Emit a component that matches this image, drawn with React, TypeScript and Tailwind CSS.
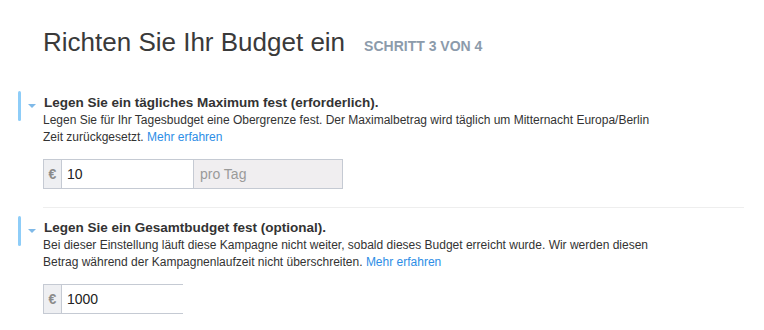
import React from "react"

function Caret() {
  return (
    <svg width="8" height="4" viewBox="0 0 8 4" className="mt-[10px] shrink-0">
      <path d="M0 0 H8 L4 4 Z" fill="#7fb9e8" />
    </svg>
  )
}

function Section({
  title,
  children,
  input,
}: {
  title: string
  children: React.ReactNode
  input: React.ReactNode
}) {
  return (
    <div className="flex pl-[18px]">
      <div className="w-[3px] h-[30px] rounded-sm bg-[#8ecdf8] shrink-0" />
      <div className="ml-[7px] mr-[7px] pt-[3px]">
        <Caret />
      </div>
      <div className="flex-1 pt-[3px]">
        <h2 className="text-[13.5px] leading-[18px] font-bold text-[#333] pl-[1px]">{title}</h2>
        <p className="text-[12px] leading-[17px] text-[#333]">{children}</p>
        <div className="mt-[13px]">{input}</div>
      </div>
    </div>
  )
}

function Link() {
  return <a className="text-[#2d8ee6]">Mehr erfahren</a>
}

export default function App() {
  return (
    <div className="w-[764px] h-[330px] overflow-hidden bg-white font-['Liberation_Sans',Arial,sans-serif]">
      {/* Header */}
      <div className="pt-[27px] pl-[43px] flex items-baseline gap-[19px]">
        <h1 className="text-[26px] leading-[30px] text-[#3a3a3a] font-light">Richten Sie Ihr Budget ein</h1>
        <span className="text-[14px] font-bold uppercase text-[#8c9bab]">Schritt 3 von 4</span>
      </div>

      <div className="mt-[34px]">
        <Section
          title="Legen Sie ein tägliches Maximum fest (erforderlich)."
          input={
            <div className="flex w-[300px] h-[30px] border border-[#c5cad3] text-[14px]">
              <div className="w-[18px] bg-[#eeeff2] border-r border-[#c5cad3] flex items-center justify-center text-[#8a8a8a] font-bold text-[14px]">
                €
              </div>
              <div className="w-[131px] bg-white flex items-center pl-[5px] text-[#222]">10</div>
              <div className="flex-1 bg-[#f0eef0] border-l border-[#c5cad3] flex items-center pl-[6px] text-[#9a9a9a]">
                pro Tag
              </div>
            </div>
          }
        >
          Legen Sie für Ihr Tagesbudget eine Obergrenze fest. Der Maximalbetrag wird täglich um Mitternacht Europa/Berlin
          <br />
          Zeit zurückgesetzt. <Link />
        </Section>
      </div>

      <div className="ml-[43px] mr-[20px] mt-[18px] h-px bg-[#eeeeee]" />

      <div className="mt-[8px]">
        <Section
          title="Legen Sie ein Gesamtbudget fest (optional)."
          input={
            <div className="flex w-[140px] h-[30px] border border-r-0 border-[#c5cad3] text-[14px]">
              <div className="w-[18px] bg-[#eeeff2] border-r border-[#c5cad3] flex items-center justify-center text-[#8a8a8a] font-bold text-[14px]">
                €
              </div>
              <div className="flex-1 bg-white flex items-center pl-[5px] text-[#222]">1000</div>
            </div>
          }
        >
          Bei dieser Einstellung läuft diese Kampagne nicht weiter, sobald dieses Budget erreicht wurde. Wir werden diesen
          <br />
          Betrag während der Kampagnenlaufzeit nicht überschreiten. <Link />
        </Section>
      </div>
    </div>
  )
}
